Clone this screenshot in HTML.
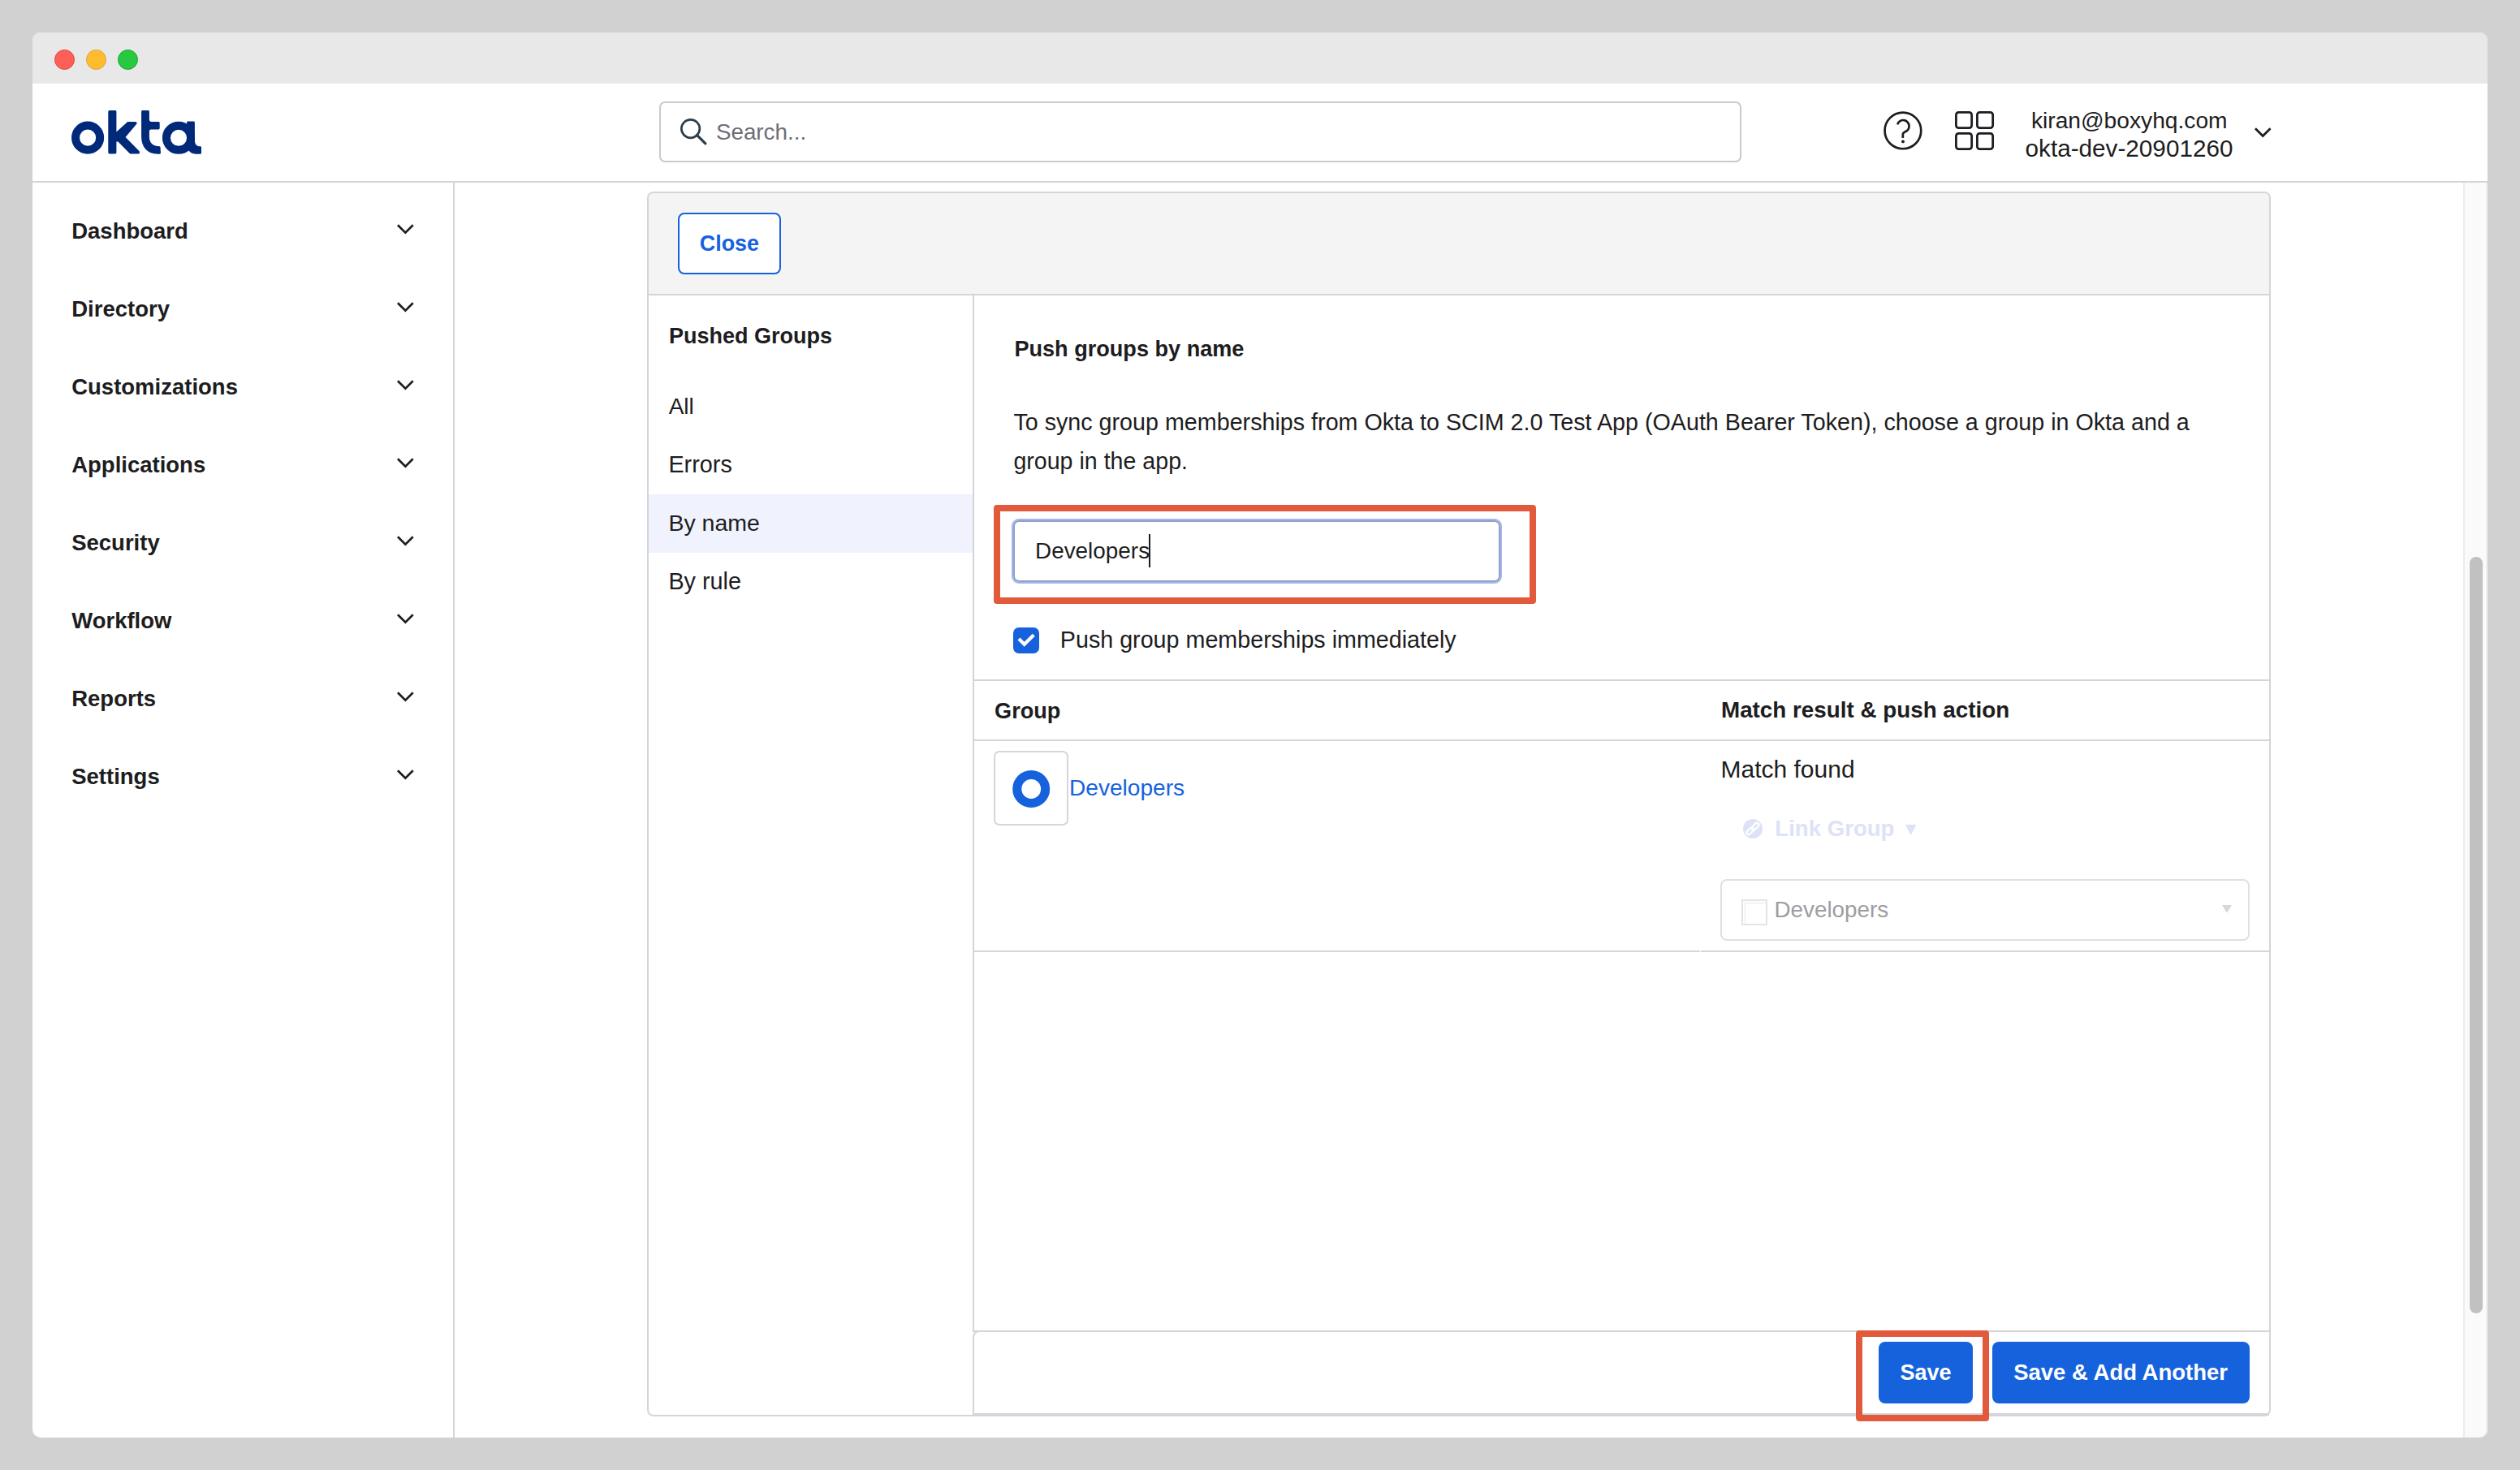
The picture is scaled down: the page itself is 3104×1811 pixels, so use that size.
<!DOCTYPE html>
<html><head><meta charset="utf-8"><style>
html,body{margin:0;padding:0;}
body{width:3104px;height:1811px;background:#d1d1d1;position:relative;overflow:hidden;font-family:"Liberation Sans",sans-serif;}
.t{position:absolute;white-space:nowrap;}
</style></head><body>
<div style="position:absolute;left:40px;top:40px;width:3024px;height:1731px;background:#fff;border-radius:10px;overflow:hidden"></div>
<div style="position:absolute;left:40px;top:40px;width:3024px;height:63px;background:#e8e8e8;border-radius:10px 10px 0 0"></div>
<div style="position:absolute;left:67.0px;top:60.8px;width:25px;height:25px;background:#fe5f57;border-radius:50%;box-sizing:border-box;border:0.5px solid #e2463f"></div>
<div style="position:absolute;left:106.0px;top:60.8px;width:25px;height:25px;background:#febc2e;border-radius:50%;box-sizing:border-box;border:0.5px solid #e5a03a"></div>
<div style="position:absolute;left:145.0px;top:60.8px;width:25px;height:25px;background:#28c840;border-radius:50%;box-sizing:border-box;border:0.5px solid #1aab29"></div>
<div style="position:absolute;left:40px;top:223px;width:3024px;height:2px;background:#d4d4da"></div>
<svg style="position:absolute;left:0;top:0" width="300" height="220" viewBox="0 0 300 220">
<circle cx="108.1" cy="169.65" r="15.05" fill="none" stroke="#00297a" stroke-width="10"/>
<path fill="#00297a" d="M134.8,136.1 L142,136.1 Q143.4,136.1 143.4,137.6 L143.4,162.4 L157.2,149.9 L166.8,149.9 Q169.6,150.6 168.2,152.8 L154.6,169 L171.6,186.2 Q173,189.4 170.2,189.4 L160.2,189.4 L145.4,174.5 L143.4,174.5 L143.4,188 Q143.4,189.4 142,189.4 L134.8,189.4 Q133.3,189.4 133.3,188 L133.3,137.6 Q133.3,136.1 134.8,136.1 Z"/>
<path fill="#00297a" d="M175.5,136.1 L182.5,136.1 Q183.9,136.1 183.9,137.5 L183.9,147.5 Q183.9,149.9 186.3,149.9 L195.5,149.9 Q196.7,149.9 196.7,151.5 L196.7,157.8 Q196.7,159.4 195.2,159.4 L185.9,159.4 Q183.9,159.4 183.9,161.6 L183.9,168.5 C183.9,176.2 188.5,180.3 196.6,180.3 Q197.4,180.3 197.5,181.2 L198,188.2 Q198,189.7 196.4,189.7 L194,189.7 C181.5,189.7 174.1,181 174.1,168.5 L174.1,137.5 Q174.1,136.1 175.5,136.1 Z"/>
<circle cx="220" cy="169.8" r="15.05" fill="none" stroke="#00297a" stroke-width="10"/>
<path fill="#00297a" d="M231.5,149.6 L238.5,149.6 Q239.9,149.6 239.9,151 L239.9,172.5 C239.9,178.2 242.3,180.3 246.8,180.3 Q248,180.3 248,181.6 L248,188.4 Q248,189.7 246.6,189.7 L241.5,189.7 C236.8,189.7 233.6,187.5 231.2,184 L230.1,169.8 L230.1,151 Q230.1,149.6 231.5,149.6 Z"/>
</svg>
<div style="position:absolute;left:812px;top:125px;width:1333px;height:75px;box-sizing:border-box;border:2px solid #c9c9cf;border-radius:7px"></div>
<svg style="position:absolute;left:800px;top:130px" width="100" height="60" viewBox="800 130 100 60">
<circle cx="850.6" cy="158.6" r="11.25" fill="none" stroke="#2a3d4b" stroke-width="2.7"/>
<line x1="858.4" y1="166.4" x2="868.9" y2="176.9" stroke="#2a3d4b" stroke-width="3.1" stroke-linecap="round"/>
</svg>
<div class="t" style="left:881.9px;top:144.2px;font-size:27.8px;line-height:37px;color:#6e6e78;">Search...</div>
<svg style="position:absolute;left:2300px;top:120px" width="200" height="80" viewBox="2300 120 200 80">
<circle cx="2343.9" cy="160.9" r="22.35" fill="none" stroke="#1d1d21" stroke-width="2.7"/>
<path d="M2337.2,153.3 A7.3,7.3 0 0 1 2351.5,155.8 C2351.5,159.3 2349.3,161.3 2346.8,162.3 C2344.9,163.1 2343.8,164 2343.8,166 L2343.8,170" fill="none" stroke="#1d1d21" stroke-width="2.7"/>
<circle cx="2344" cy="174.4" r="1.9" fill="#1d1d21"/>
<rect x="2409.4" y="138.4" width="19.25" height="19.25" rx="3.2" fill="none" stroke="#1d1d21" stroke-width="2.75"/>
<rect x="2435.4" y="138.4" width="19.25" height="19.25" rx="3.2" fill="none" stroke="#1d1d21" stroke-width="2.75"/>
<rect x="2409.4" y="164.4" width="19.25" height="19.25" rx="3.2" fill="none" stroke="#1d1d21" stroke-width="2.75"/>
<rect x="2435.4" y="164.4" width="19.25" height="19.25" rx="3.2" fill="none" stroke="#1d1d21" stroke-width="2.75"/>
</svg>
<div class="t" style="left:2501.9px;top:129.6px;font-size:28.2px;line-height:37px;color:#1d1d21;">kiran@boxyhq.com</div>
<div class="t" style="left:2494.6px;top:162.9px;font-size:29.7px;line-height:39px;color:#1d1d21;">okta-dev-20901260</div>
<svg style="position:absolute;left:2772.2px;top:152.2px" width="30.5" height="21.80000000000001" viewBox="2772.2 152.2 30.5 21.80000000000001"><polyline points="2778.15,158.40 2787.45,167.70 2796.75,158.40" fill="none" stroke="#1d1d21" stroke-width="2.7"/></svg>
<div style="position:absolute;left:558px;top:225px;width:2px;height:1546px;background:#d4d4da"></div>
<div class="t" style="left:88.2px;top:267px;font-size:27.5px;line-height:36px;font-weight:bold;color:#1d1d21;">Dashboard</div>
<svg style="position:absolute;left:484.3px;top:271.2px" width="30.69999999999999" height="22.400000000000034" viewBox="484.3 271.2 30.69999999999999 22.400000000000034"><polyline points="490.25,277.40 499.65,286.80 509.05,277.40" fill="none" stroke="#1d1d21" stroke-width="2.7"/></svg>
<div class="t" style="left:88.2px;top:363px;font-size:27.5px;line-height:36px;font-weight:bold;color:#1d1d21;">Directory</div>
<svg style="position:absolute;left:484.3px;top:367.15px" width="30.69999999999999" height="22.400000000000034" viewBox="484.3 367.15 30.69999999999999 22.400000000000034"><polyline points="490.25,373.35 499.65,382.75 509.05,373.35" fill="none" stroke="#1d1d21" stroke-width="2.7"/></svg>
<div class="t" style="left:88.2px;top:459px;font-size:27.5px;line-height:36px;font-weight:bold;color:#1d1d21;">Customizations</div>
<svg style="position:absolute;left:484.3px;top:463.09999999999997px" width="30.69999999999999" height="22.400000000000034" viewBox="484.3 463.09999999999997 30.69999999999999 22.400000000000034"><polyline points="490.25,469.30 499.65,478.70 509.05,469.30" fill="none" stroke="#1d1d21" stroke-width="2.7"/></svg>
<div class="t" style="left:88.2px;top:555px;font-size:27.5px;line-height:36px;font-weight:bold;color:#1d1d21;">Applications</div>
<svg style="position:absolute;left:484.3px;top:559.0500000000001px" width="30.69999999999999" height="22.399999999999977" viewBox="484.3 559.0500000000001 30.69999999999999 22.399999999999977"><polyline points="490.25,565.25 499.65,574.65 509.05,565.25" fill="none" stroke="#1d1d21" stroke-width="2.7"/></svg>
<div class="t" style="left:88.2px;top:651px;font-size:27.5px;line-height:36px;font-weight:bold;color:#1d1d21;">Security</div>
<svg style="position:absolute;left:484.3px;top:655.0px" width="30.69999999999999" height="22.399999999999977" viewBox="484.3 655.0 30.69999999999999 22.399999999999977"><polyline points="490.25,661.20 499.65,670.60 509.05,661.20" fill="none" stroke="#1d1d21" stroke-width="2.7"/></svg>
<div class="t" style="left:88.2px;top:747px;font-size:27.5px;line-height:36px;font-weight:bold;color:#1d1d21;">Workflow</div>
<svg style="position:absolute;left:484.3px;top:750.95px" width="30.69999999999999" height="22.399999999999977" viewBox="484.3 750.95 30.69999999999999 22.399999999999977"><polyline points="490.25,757.15 499.65,766.55 509.05,757.15" fill="none" stroke="#1d1d21" stroke-width="2.7"/></svg>
<div class="t" style="left:88.2px;top:843px;font-size:27.5px;line-height:36px;font-weight:bold;color:#1d1d21;">Reports</div>
<svg style="position:absolute;left:484.3px;top:846.9000000000001px" width="30.69999999999999" height="22.399999999999977" viewBox="484.3 846.9000000000001 30.69999999999999 22.399999999999977"><polyline points="490.25,853.10 499.65,862.50 509.05,853.10" fill="none" stroke="#1d1d21" stroke-width="2.7"/></svg>
<div class="t" style="left:88.2px;top:939px;font-size:27.5px;line-height:36px;font-weight:bold;color:#1d1d21;">Settings</div>
<svg style="position:absolute;left:484.3px;top:942.85px" width="30.69999999999999" height="22.399999999999977" viewBox="484.3 942.85 30.69999999999999 22.399999999999977"><polyline points="490.25,949.05 499.65,958.45 509.05,949.05" fill="none" stroke="#1d1d21" stroke-width="2.7"/></svg>
<div style="position:absolute;left:3034px;top:225px;width:30px;height:1546px;background:#fafafa;box-sizing:border-box;border-left:2px solid #ececec;border-right:2px solid #f0f0f0;border-radius:0 0 10px 0"></div>
<div style="position:absolute;left:3042px;top:686px;width:16px;height:932px;background:#c1c1c1;border-radius:8px"></div>
<div style="position:absolute;left:797px;top:236px;width:2000px;height:1509px;box-sizing:border-box;border:2px solid #d4d4da;border-radius:8px;background:#fff;overflow:hidden"></div>
<div style="position:absolute;left:799px;top:238px;width:1996px;height:124px;background:#f4f4f4;border-radius:6px 6px 0 0"></div>
<div style="position:absolute;left:799px;top:362px;width:1996px;height:2px;background:#d4d4da"></div>
<div style="position:absolute;left:835px;top:262px;width:127px;height:76px;box-sizing:border-box;border:2px solid #1662dd;border-radius:8px;background:#fff"></div>
<div class="t" style="left:861.8px;top:283.4px;font-size:26.9px;line-height:35px;font-weight:bold;color:#1662dd;">Close</div>
<div style="position:absolute;left:1198px;top:364px;width:2px;height:1277px;background:#d4d4da"></div>
<div class="t" style="left:824.0px;top:396.2px;font-size:27.0px;line-height:36px;font-weight:bold;color:#1d1d21;">Pushed Groups</div>
<div style="position:absolute;left:799px;top:609px;width:399px;height:72px;background:#f0f3fe"></div>
<div class="t" style="left:823.7px;top:482px;font-size:28px;line-height:37px;color:#1d1d21;">All</div>
<div class="t" style="left:823.4px;top:553px;font-size:28.8px;line-height:38px;color:#1d1d21;">Errors</div>
<div class="t" style="left:823.4px;top:625px;font-size:28.5px;line-height:38px;color:#1d1d21;">By name</div>
<div class="t" style="left:823.4px;top:697px;font-size:28.8px;line-height:38px;color:#1d1d21;">By rule</div>
<div class="t" style="left:1249.4px;top:411.8px;font-size:27.1px;line-height:36px;font-weight:bold;color:#1d1d21;">Push groups by name</div>
<div class="t" style="left:1248.4px;top:501.20000000000005px;font-size:28.7px;line-height:38px;color:#1d1d21;">To sync group memberships from Okta to SCIM 2.0 Test App (OAuth Bearer Token), choose a group in Okta and a</div>
<div class="t" style="left:1248.4px;top:549.2px;font-size:28.6px;line-height:38px;color:#1d1d21;">group in the app.</div>
<div style="position:absolute;left:1246px;top:639px;width:604px;height:80px;box-sizing:border-box;border:2px solid #a7b5ee;border-radius:9px"></div>
<div style="position:absolute;left:1248px;top:641px;width:600px;height:76px;box-sizing:border-box;border:2px solid #8da1c9;border-radius:7px;background:#fff"></div>
<div class="t" style="left:1275.0px;top:660px;font-size:27.9px;line-height:37px;color:#1d1d21;">Developers</div>
<div style="position:absolute;left:1415px;top:658px;width:2px;height:41px;background:#1d1d21"></div>
<div style="position:absolute;left:1224px;top:622px;width:668px;height:122px;box-sizing:border-box;border:8px solid #e25a3c;border-radius:4px"></div>
<div style="position:absolute;left:1248px;top:773px;width:32px;height:32px;background:#1662dd;border-radius:7px"></div>
<svg style="position:absolute;left:1248px;top:773px" width="32" height="32" viewBox="0 0 32 32"><polyline points="7.0,14.1 13.7,20.8 25.3,9.2" fill="none" stroke="#fff" stroke-width="4.2"/></svg>
<div class="t" style="left:1305.8px;top:769px;font-size:28.7px;line-height:38px;color:#1d1d21;">Push group memberships immediately</div>
<div style="position:absolute;left:1200px;top:837px;width:1595px;height:2px;background:#d4d4da"></div>
<div class="t" style="left:1225.1px;top:857.5px;font-size:27.1px;line-height:36px;font-weight:bold;color:#1d1d21;">Group</div>
<div class="t" style="left:2120.0px;top:856.3px;font-size:27.8px;line-height:37px;font-weight:bold;color:#1d1d21;">Match result &amp; push action</div>
<div style="position:absolute;left:1200px;top:911px;width:1595px;height:2px;background:#d4d4da"></div>
<div style="position:absolute;left:1224px;top:925px;width:92px;height:92px;box-sizing:border-box;border:2px solid #d6d6da;border-radius:7px;background:#fff"></div>
<svg style="position:absolute;left:1240px;top:942px" width="60" height="60" viewBox="1240 942 60 60"><circle cx="1270.2" cy="972" r="17.45" fill="none" stroke="#1662dd" stroke-width="11.1"/></svg>
<div class="t" style="left:1317.0px;top:952px;font-size:28.1px;line-height:37px;color:#1662dd;">Developers</div>
<div class="t" style="left:2119.5px;top:927.7px;font-size:30.0px;line-height:39px;color:#1d1d21;">Match found</div>
<svg style="position:absolute;left:2140px;top:1000px" width="40" height="40" viewBox="2140 1000 40 40">
<circle cx="2159" cy="1021" r="12" fill="#dde2f6"/>
<g fill="none" stroke="#fff" stroke-width="2.3">
<rect x="-5.15" y="-2.4" width="10.3" height="4.8" rx="2.4" transform="translate(2162,1018.2) rotate(-45)"/>
<rect x="-5.15" y="-2.4" width="10.3" height="4.8" rx="2.4" transform="translate(2155.7,1023.9) rotate(-45)"/>
</g></svg>
<div class="t" style="left:2186.3px;top:1003px;font-size:27.6px;line-height:36px;font-weight:bold;color:#dde2f6;">Link Group</div>
<svg style="position:absolute;left:2340px;top:1010px" width="30" height="30" viewBox="2340 1010 30 30"><polygon points="2347,1016 2360.5,1016 2353.75,1029" fill="#dde2f6"/></svg>
<div style="position:absolute;left:2119px;top:1083px;width:652px;height:76px;box-sizing:border-box;border:2px solid #e0e0e3;border-radius:8px;background:#fff"></div>
<div style="position:absolute;left:2145px;top:1108px;width:32px;height:32px;box-sizing:border-box;border:2px solid #e3e3e3;background:#fff"></div>
<div style="position:absolute;left:2149px;top:1112px;width:27px;height:27px;box-sizing:border-box;border-top:1px solid #e6e6e6;border-left:1px solid #e6e6e6"></div>
<div class="t" style="left:2185.5px;top:1102px;font-size:27.8px;line-height:37px;color:#9d9da1;">Developers</div>
<svg style="position:absolute;left:2730px;top:1108px" width="25" height="25" viewBox="2730 1108 25 25"><polygon points="2737,1115 2749,1115 2743,1124.8" fill="#d8d7dc"/></svg>
<div style="position:absolute;left:1200px;top:1171px;width:894px;height:2px;background:#d4d4da"></div>
<div style="position:absolute;left:2095px;top:1171px;width:700px;height:2px;background:#d4d4da"></div>
<div style="position:absolute;left:1198px;top:1639px;width:1597px;height:2px;background:#d4d4da"></div>
<div style="position:absolute;left:1198px;top:1639px;width:1597px;height:105px;box-sizing:border-box;border-left:2px solid #d4d4da;border-bottom:2px solid #d4d4da;border-top:2px solid #d4d4da;border-radius:8px 0 0 0"></div>
<div style="position:absolute;left:1200px;top:1741px;width:1595px;height:3px;background:#d4d4da"></div>
<div style="position:absolute;left:2314px;top:1653px;width:116px;height:76px;background:#1662dd;border-radius:8px"></div>
<div class="t" style="left:2340.4px;top:1673px;font-size:27.0px;line-height:36px;font-weight:bold;color:#fff;">Save</div>
<div style="position:absolute;left:2454px;top:1653px;width:317px;height:76px;background:#1662dd;border-radius:8px"></div>
<div class="t" style="left:2480.2px;top:1673px;font-size:27.5px;line-height:36px;font-weight:bold;color:#fff;">Save &amp; Add Another</div>
<div style="position:absolute;left:2286px;top:1639px;width:164px;height:112px;box-sizing:border-box;border:8px solid #e25a3c;border-radius:4px"></div>
</body></html>
